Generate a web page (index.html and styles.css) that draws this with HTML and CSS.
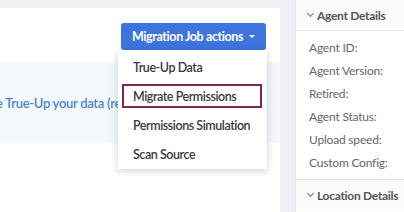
FILE: index.html
```html
<!DOCTYPE html>
<html lang="en">
<head>
    <meta charset="UTF-8">
    <title>Migration Job</title>
    <link rel="stylesheet" href="styles.css">
</head>
<body>
    <div class="layout">
        <div class="main-panel">
            <div class="toolbar">
                <div class="actions">
                    <button class="actions-btn">Migration Job actions <span class="caret"></span></button>
                    <ul class="actions-menu">
                        <li>True-Up Data</li>
                        <li class="active">Migrate Permissions</li>
                        <li>Permissions Simulation</li>
                        <li>Scan Source</li>
                    </ul>
                </div>
            </div>
            <div class="notice">
                <a class="notice-link">e True-Up your data (re-run the scan)</a>
            </div>
        </div>

        <div class="side-panel">
            <div class="side-header"><span class="chevron"></span>Agent Details</div>
            <ul class="side-list">
                <li>Agent ID:</li>
                <li>Agent Version:</li>
                <li>Retired:</li>
                <li>Agent Status:</li>
                <li>Upload speed:</li>
                <li>Custom Config:</li>
            </ul>
            <div class="side-header bordered"><span class="chevron"></span>Location Details</div>
        </div>
    </div>
</body>
</html>
```

FILE: styles.css
```css
body {
    margin: 0;
    background: #eff0f3;
    font-family: 'Lato', 'Noto Sans', sans-serif;
    width: 404px;
    height: 212px;
    overflow: hidden;
}

.layout {
    display: flex;
    gap: 15px;
    height: 212px;
}

/* Main panel */
.main-panel {
    width: 280px;
    flex-shrink: 0;
    margin-top: 8px;
    background: #fff;
}

.toolbar {
    height: 55px;
    padding: 15px 14px 0 0;
    box-sizing: border-box;
    display: flex;
    justify-content: flex-end;
}

.actions {
    position: relative;
}

.actions-btn {
    display: flex;
    align-items: center;
    gap: 6px;
    height: 27px;
    width: 145px;
    padding: 0 0 0 11px;
    background: #3d74dd;
    border: none;
    border-radius: 3px;
    color: #fff;
    font-family: 'Lato', 'Noto Sans', sans-serif;
    font-size: 12.5px;
    font-weight: 700;
    letter-spacing: -0.4px;
    white-space: nowrap;
    cursor: pointer;
}

.caret {
    width: 0;
    height: 0;
    border-left: 3px solid transparent;
    border-right: 3px solid transparent;
    border-top: 3px solid #fff;
}

.actions-menu {
    position: absolute;
    top: 27px;
    left: -3px;
    width: 149px;
    margin: 0;
    padding: 5px 0 3px;
    list-style: none;
    background: #fff;
    box-shadow: 0 2px 8px rgba(0, 0, 0, 0.18);
    display: flex;
    flex-direction: column;
    gap: 5px;
    z-index: 10;
}

.actions-menu li {
    height: 24px;
    margin: 0 5px 0 4px;
    padding-left: 9px;
    border: 2px solid transparent;
    box-sizing: border-box;
    display: flex;
    align-items: center;
    color: #3a3a3a;
    font-size: 12.5px;
    font-weight: 600;
    letter-spacing: -0.45px;
    white-space: nowrap;
}

.actions-menu li.active {
    border-color: #8a2444;
}

.notice {
    height: 80px;
    background: #f4f7fc;
    display: flex;
    align-items: center;
    overflow: hidden;
}

.notice-link {
    margin-left: -4px;
    color: #4a84d4;
    font-size: 13px;
    font-weight: 600;
    letter-spacing: -0.3px;
    white-space: nowrap;
}

/* Side panel */
.side-panel {
    flex: 1;
    background: #fff;
    border-left: 1px solid #e6e7ea;
}

.side-header {
    height: 31px;
    padding-left: 12px;
    box-sizing: border-box;
    display: flex;
    align-items: center;
    gap: 4px;
    background: #fbfbfc;
    border-bottom: 1px solid #e6e7ea;
    color: #555;
    font-size: 12px;
    font-weight: 700;
    letter-spacing: -0.3px;
    white-space: nowrap;
}

.side-header.bordered {
    border-top: 1px solid #e6e7ea;
    border-bottom: none;
}

.chevron {
    width: 4px;
    height: 4px;
    border-right: 1px solid #777;
    border-bottom: 1px solid #777;
    transform: rotate(45deg);
    margin-top: -3px;
}

.side-list {
    margin: 0;
    padding: 5px 0 5px 13px;
    list-style: none;
}

.side-list li {
    height: 23px;
    line-height: 23px;
    color: #666;
    font-size: 12px;
    letter-spacing: -0.2px;
}
```
